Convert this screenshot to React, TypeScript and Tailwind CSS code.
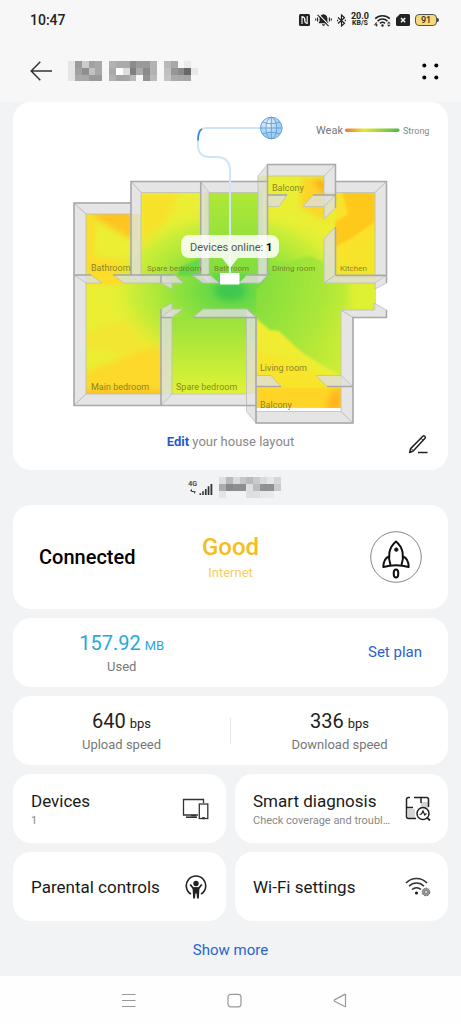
import type { ReactNode } from "react";

const TITLE_ROWS = [
  "#e4e4e4 #9a9a9a #cccccc #a2a2a2 #a8a8a8 - #b2b2b2 #aaaaaa #aaaaaa #8c8c8c #9a9a9a #999999 #b2b2b2 - #b8b8b8 #a8a8a8 - #ebebeb -",
  "#e4e4e4 #a0a0a0 #8f8f8f #c2c2c2 #a8a8a8 - #aaaaaa #fdfdfd #dddddd #808080 #aaaaaa #8a8a8a #b2b2b2 - #c0c0c0 #969696 #8a8a8a #686868 #e8e8e8",
  "#e4e4e4 #aaaaaa #a8a8a8 #999999 #9a9a9a - #b2b2b2 #a4a4a4 #a6a6a6 #bababa - #929292 #bababa - #c4c4c4 #aaaaaa #aaaaaa #a6a6a6 -",
];

const OPERATOR_ROWS = [
  "#dcdee0 #b8babc #d8dadc #c4c6c8 #b8babc #c8cacc #d8dadc #e4e6e8 #d4d6d8",
  "#aaacae #88898b #8d8e90 #8d8e90 #dddfe1 #bbbdbf #909193 #909193 #c8cacc",
  "#e2e4e6 - - - #dddfe1 #dddfe1 #e6e8ea #e8eaec -",
];

const Mosaic = ({ rows, label }: { rows: string[]; label: string }) => {
  const cols = rows[0].split(" ").length;
  return (
    <svg
      role="img"
      aria-label={label}
      viewBox={`0 0 ${cols * 7} 21`}
      width={cols * 6.85}
      height={20.6}
      shapeRendering="crispEdges"
    >
      {rows.map((row, y) =>
        row
          .split(" ")
          .map((fill, x) =>
            fill === "-" ? null : (
              <rect key={`${x}-${y}`} x={x * 7} y={y * 7} width={7} height={7} fill={fill} />
            )
          )
      )}
    </svg>
  );
};

const StatusBar = () => (
  <div className="flex h-10 items-center justify-between pl-[30px] pr-[22px] text-[#222]">
    <span className="text-sm font-medium">10:47</span>
    <div className="flex items-center gap-[5px]">
      <svg width="11" height="12" viewBox="0 0 11 12">
        <rect width="11" height="12" rx="1.5" fill="#222" />
        <path d="M3 10V2.600Q6 3 6 6V8.500M8.200 2V9.400Q5.600 9 5.600 6V4" fill="none" stroke="#f7f7f7" strokeWidth="1.100" />
      </svg>
      <svg width="17" height="14" viewBox="0 0 17 14">
        <path d="M8.500 1.200c-2.600.4-3.900 2-3.900 4.300v2.700L3.400 10.300h10.200L12.400 8.200V5.500c0-2.300-1.300-3.900-3.900-4.300z" fill="#222" />
        <path d="M7 11.300h3a1.500 1.500 0 0 1-3 0z" fill="#222" />
        <path d="M3.400 1.200l11 11.300" stroke="#f7f7f7" strokeWidth="1.200" />
        <path d="M2.600 1.800l11 11.300" stroke="#222" strokeWidth="1.100" />
        <path d="M2.600 4.500v4M.7 5.500v2M14.400 4.500v4M16.300 5.500v2" stroke="#222" strokeWidth="1.100" />
      </svg>
      <svg width="9" height="13" viewBox="0 0 9 13" fill="none" stroke="#222" strokeWidth="1.200">
        <path d="M1 3.500L7.500 9.300L4.500 12V1L7.500 3.700L1 9.500" />
        <path d="M0 6.500h1.200M7.800 6.500H9" strokeWidth="1.400" />
      </svg>
      <div className="flex flex-col items-center font-bold">
        <span className="text-[9px] leading-[7px]">20.0</span>
        <span className="text-[7px] leading-[7px]">KB/S</span>
      </div>
      <svg width="17" height="13" viewBox="0 0 17 13" fill="none" stroke="#222">
        <path d="M1.200 4.600a10.500 10.500 0 0 1 14.600 0M3.600 7.100a7 7 0 0 1 9.800 0M6 9.400a3.800 3.800 0 0 1 5 0" strokeWidth="1.500" />
        <circle cx="8.500" cy="11.500" r="1.200" fill="#222" stroke="none" />
        <path d="M2.600 8.200L.6 11h3M2.600 9.500v3" strokeWidth=".9" />
        <path d="M13 9.600l1.800-2 1.800 2zM13 10.800l1.800 2 1.800-2z" fill="#222" stroke="none" />
      </svg>
      <svg width="14" height="12" viewBox="0 0 14 12">
        <path d="M4 0h8.500A1.500 1.500 0 0 1 14 1.500v9a1.500 1.500 0 0 1-1.500 1.500h-11A1.500 1.500 0 0 1 0 10.500V4z" fill="#222" />
        <path d="M5 4l4.200 4.200M9.200 4L5 8.200" stroke="#f7f7f7" strokeWidth="1.500" />
      </svg>
      <div className="flex items-center">
        <span className="flex h-3 w-[22px] items-center justify-center rounded border border-[#555] bg-[#f8d978] text-[9px] font-medium leading-none text-[#333]">
          91
        </span>
        <span className="h-1 w-[2px] rounded-r bg-[#444]" />
      </div>
    </div>
  </div>
);

const Header = () => (
  <header className="flex h-[62px] items-center pl-[30px] pr-[22px]">
    <button type="button" aria-label="Back">
      <svg width="22" height="20" viewBox="0 0 22 20" fill="none" stroke="#333" strokeWidth="1.500">
        <path d="M10.300.8L1.200 10l9.100 9.200M1.200 10H22" />
      </svg>
    </button>
    <h1 className="ml-4">
      <Mosaic rows={TITLE_ROWS} label="Device name" />
    </h1>
    <button type="button" aria-label="More" className="ml-auto">
      <svg width="17" height="17" viewBox="0 0 17 17">
        <circle cx="2.300" cy="2.500" r="2" />
        <circle cx="14.300" cy="2.500" r="2" />
        <circle cx="2.300" cy="14.500" r="2" />
        <circle cx="14.300" cy="14.500" r="2" />
      </svg>
    </button>
  </header>
);

const WALLS = [
  // outer walls
  "74,203 86,214 86,394 74,405.500",
  "74,203 131,203 131,214 86,214",
  "131,181.500 267,181.500 258,192.500 141,192.500",
  "267.500,164.500 335.500,164.500 324,176 267.500,176",
  "335.500,181.500 386.500,181.500 375,192.500 335.500,192.500",
  "386.500,181.500 375,192.500 375,289 386.500,283",
  "341,310 374,310 374,303 386.500,310 386.500,317.500 353,317.500",
  "353,317.500 341,310 341,411.500 353,423",
  "256,411.500 341,411.500 353,423 256,423",
  "86,394 246.500,394 246.500,405.500 74,405.500",
  // verticals
  "131,181.500 141,192.500 141,283 131,275",
  "200.700,181.500 209,192.500 209,283 200.700,275",
  "267.500,164.500 258,176 258,283 267.500,275",
  "335.500,164.500 335.500,208 324,219 324,176",
  "335.500,227 324,239 324,283 335.500,275",
  "161,275 172,283 172,289 161,283",
  "161,309 172,303 172,394 161,405.500",
  "246.500,309 256,317.500 256,423 246.500,411.500",
  // horizontals
  "74,275 91,275 102,283 86,283",
  "113,275 175,275 183,283 124,283",
  "192,275 210,275 219,283 203,283",
  "247,275 267.500,275 260,283 239,283",
  "324,283 335.500,275 386.500,275 375,283",
  "161,317.500 172,317.500 183,309 172,309",
  "193,317.500 256,317.500 246.500,309 203,309",
  "267.500,195 287,195 279,206.500 267.500,206.500",
  "313,195 335.500,195 324,206.500 303,206.500",
  "256,375.500 271,375.500 281,386.500 256,386.500",
  "316,375.500 341,375.500 353,386.500 327,386.500",
];

const WALL_TOPS = [
  "M131 203H74V405.500H256",
  "M74 275H91M113 275H175M192 275H210M247 275H267.500M335.500 275.500H386.500",
  "M131 275V181.500H267.500M200.700 181.500V275",
  "M267.500 275V164.500H335.500V208M335.500 181.500H386.500V283",
  "M335.500 227V275M161 275V283M161 309V405.500",
  "M161 317.500H172M193 317.500H256V423H353V317.500H386.500V310",
  "M267.500 195H287M313 195H335.500M256 386.500H281M327 386.500H353",
];

const ROOMS = [
  { name: "Balcony", x: 272, y: 191, size: 9 },
  { name: "Bathroom", x: 91, y: 271, size: 9 },
  { name: "Spare bedroom", x: 147, y: 271, size: 8 },
  { name: "Bathroom", x: 214, y: 271, size: 8 },
  { name: "Dining room", x: 272, y: 271, size: 8 },
  { name: "Kitchen", x: 340, y: 271, size: 8 },
  { name: "Main bedroom", x: 91, y: 390, size: 9 },
  { name: "Spare bedroom", x: 176, y: 390, size: 9 },
  { name: "Living room", x: 260, y: 371, size: 9 },
  { name: "Balcony", x: 260, y: 408, size: 9 },
];

const HouseMap = () => (
  <svg className="block w-full" viewBox="13 102 435 325" fontFamily="Roboto, sans-serif">
    <defs>
      <clipPath id="floor">
        <path d="M86 214H141V192.500H258V176H324V192.500H375V283H376V310H341V408H256V394H86z" />
      </clipPath>
      <radialGradient id="signal" gradientUnits="userSpaceOnUse" cx="0" cy="0" r="1" gradientTransform="translate(232 290) scale(125 84)">
        <stop offset="0" stopColor="#4fd04a" />
        <stop offset=".2" stopColor="#6cd945" />
        <stop offset=".5" stopColor="#9ae43c" />
        <stop offset=".8" stopColor="#c4ed38" stopOpacity=".8" />
        <stop offset="1" stopColor="#e2f034" stopOpacity="0" />
      </radialGradient>
      <linearGradient id="spare" x1="0" y1="0" x2="0" y2="1">
        <stop offset="0" stopColor="#98e23c" />
        <stop offset=".6" stopColor="#c4ec38" />
        <stop offset="1" stopColor="#e0f334" />
      </linearGradient>
      <linearGradient id="bath" x1="0" y1="0" x2="0" y2="1">
        <stop offset="0" stopColor="#b2e836" />
        <stop offset="1" stopColor="#7fdd40" />
      </linearGradient>
      <linearGradient id="living" x1="0" y1="0" x2="1" y2=".3">
        <stop offset="0" stopColor="#84de3e" />
        <stop offset=".6" stopColor="#a8e63a" />
        <stop offset="1" stopColor="#d2ef38" />
      </linearGradient>
      <linearGradient id="scale">
        <stop offset="0" stopColor="#e67840" />
        <stop offset=".35" stopColor="#e8e83a" />
        <stop offset="1" stopColor="#4cb84a" />
      </linearGradient>
      <radialGradient id="globe" cx=".35" cy=".3">
        <stop offset="0" stopColor="#eef7ff" />
        <stop offset="1" stopColor="#a4cdf0" />
      </radialGradient>
      <filter id="soft" x="-20%" y="-20%" width="140%" height="140%">
        <feGaussianBlur stdDeviation="3" />
      </filter>
      <filter id="edge">
        <feGaussianBlur stdDeviation="1" />
      </filter>
    </defs>

    <g clipPath="url(#floor)">
      <rect x="74" y="164" width="314" height="260" fill="#eaef34" />
      <g filter="url(#soft)">
        <path d="M90 210H134V240L100 222z" fill="#ffc420" />
        <path d="M84 255L134 262V283H84z" fill="#fbdc2a" />
        <path d="M84 215H96L92 283H84z" fill="#fbdc2a" />
        <path d="M84 330L160 310V360L84 350z" fill="#f3e630" />
        <path d="M84 372L165 342V396H84z" fill="#fcd92c" />
        <path d="M84 391H164V397H84z" fill="#ffb820" />
        <path d="M140 190H180L165 225L141 250z" fill="#f7e22c" />
        <path d="M302 178H326V222L300 206z" fill="#fcd426" />
        <path d="M312 180H326V196z" fill="#fba91e" />
      </g>
      <rect x="74" y="180" width="302" height="230" fill="url(#signal)" />
      <rect x="205" y="190" width="58" height="85" fill="url(#bath)" />
      <path d="M256 290L280 264L310 256L324 262V283H376V310H341V376L256 325z" fill="url(#living)" filter="url(#edge)" opacity=".85" />
      <rect x="350" y="280" width="30" height="34" fill="#def132" filter="url(#soft)" />
      <rect x="163" y="317" width="86" height="78" fill="url(#spare)" />
      <path d="M256 318L270 330L279 331L302 353L311 365L318 374L341 380V408H256z" fill="#f0ec30" filter="url(#edge)" />
      <path d="M256 350L285 360L341 386V408H256z" fill="#f8e42c" filter="url(#soft)" />
      <path d="M256 388H341V408H256z" fill="#ffd426" filter="url(#edge)" />
      <path d="M330 396L341 386V410H326z" fill="#ffb31c" filter="url(#soft)" />
      <g filter="url(#edge)">
        <path d="M335 192H375V275H335z" fill="#fae22a" />
        <path d="M342 192H375V222L352 238L335 247V222L348 214z" fill="#ffc91f" />
        <path d="M335 258L375 236V275H335z" fill="#f6e42c" />
      </g>
      <g filter="url(#edge)">
        <path d="M183 266L200 258V276H176zM211 273H247L239 284H219z" fill="#66d844" />
        <path d="M92 274H112L124 284H102z" fill="#fddc2a" />
      </g>
      <ellipse cx="230" cy="291" rx="15" ry="9" fill="#3cc850" filter="url(#soft)" />
    </g>

    <g fill="#dfdfdf" fillOpacity=".8" stroke="#bdbdb8" strokeWidth=".8" strokeLinejoin="round">
      {WALLS.map((points) => (
        <polygon key={points} points={points} />
      ))}
    </g>
    <path d={WALL_TOPS.join("")} fill="none" stroke="#a9a9a9" strokeWidth="1.500" />

    <g fill="#6f6a20" fillOpacity=".8">
      {ROOMS.map((room) => (
        <text key={`${room.x}-${room.y}`} x={room.x} y={room.y} fontSize={room.size}>
          {room.name}
        </text>
      ))}
    </g>

    <path d="M260 128H206Q198 128 198 137V145Q198 157 210 157H216Q230 157 230 171V273" fill="none" stroke="#cfe5fa" strokeWidth="2" />
    <path d="M202 129Q198 131 198 140.500" fill="none" stroke="#2f86cc" strokeWidth="1.600" />
    <g fill="none" stroke="#5f9ed6" strokeWidth=".9">
      <circle cx="271.300" cy="128" r="10.800" fill="url(#globe)" />
      <ellipse cx="271.300" cy="128" rx="5.400" ry="10.800" />
      <path d="M271.300 117.200V138.800M260.500 128H282M262.500 122Q271.300 125.500 280 122M262.500 134Q271.300 130.500 280 134" />
    </g>

    <path d="M189 235H271a8 8 0 0 1 8 8v7a8 8 0 0 1-8 8H238L230 268L222 258H189a8 8 0 0 1-8-8v-7a8 8 0 0 1 8-8z" fill="#fff" fillOpacity=".85" />
    <rect x="220" y="273" width="19.500" height="11.500" rx="1" fill="#fff" />
    <text x="190" y="251" fontSize="11" fill="#555">
      Devices online: <tspan fill="#000" fontWeight="700">1</tspan>
    </text>

    <text x="316" y="134" fontSize="11" fill="#777">Weak</text>
    <rect x="345" y="128.500" width="54.500" height="3.500" rx="1.700" fill="url(#scale)" />
    <text x="403" y="134" fontSize="9" fill="#888">Strong</text>
  </svg>
);

const HouseCard = () => (
  <section className="rounded-[18px] bg-white">
    <HouseMap />
    <div className="relative flex h-[43px] justify-center pt-[5px] text-[13px] leading-5 text-[#888]">
      <p>
        <a href="#layout" className="font-bold text-[#1c5bd0]">Edit</a> your house layout
      </p>
      <button type="button" aria-label="Edit layout" className="absolute right-5 top-2">
        <svg width="20" height="20" viewBox="0 0 20 20" fill="none" stroke="#222" strokeWidth="1.500" strokeLinejoin="round">
          <path d="M14.800 1.200a1.500 1.500 0 0 1 2.200 2L5.200 16 1.600 17.500l1-3.900z" />
          <path d="M13 3.300l2.200 2M3 13.500l2 2" strokeWidth="1" />
          <path d="M10 17.500h9.500" />
        </svg>
      </button>
    </div>
  </section>
);

const NetworkRow = () => (
  <div className="flex h-[35px] items-center justify-center gap-[6px] pl-2">
    <div className="flex items-end gap-[1px]">
      <div className="flex flex-col items-center text-[7px] font-medium leading-[8px] text-[#333]">
        <span>4G</span>
        <svg width="6" height="7" viewBox="0 0 6 7" fill="#333">
          <path d="M0 3L2 .8V3.400zM6 3.500L4 6V3.200zM1.500 3H4.500V4H1.500z" />
        </svg>
      </div>
      <svg width="15" height="12" viewBox="0 0 15 12" fill="#333">
        <path d="M1.500 10.200h1.600V12H1.500zM4.200 8.200h1.600V12H4.200zM6.900 6h1.700v6H6.900zM9.700 3.300h1.700V12H9.700zM12.500 1h1.800v11h-1.800z" />
      </svg>
    </div>
    <Mosaic rows={OPERATOR_ROWS} label="Operator" />
  </div>
);

const StatusCard = () => (
  <section className="grid h-[104px] grid-cols-3 items-center rounded-[18px] bg-white px-[26px]">
    <h2 className="text-xl font-medium text-black">Connected</h2>
    <div className="text-center">
      <p className="text-2xl font-medium leading-8 text-[#f5bd1d]">Good</p>
      <p className="text-[13px] leading-5 text-[#f7ce5c]">Internet</p>
    </div>
    <button type="button" aria-label="Speed up" className="justify-self-end">
      <svg width="52" height="52" viewBox="0 0 52 52" fill="none" stroke="#111" strokeWidth="2" strokeLinejoin="round">
        <circle cx="26" cy="26" r="25.300" stroke="#888" strokeWidth="1" />
        <path d="M20.500 34C17.800 26 18.500 16.500 26 10.500C33.500 16.500 34.200 26 31.500 34" />
        <path d="M18.900 25.500Q13.600 27.500 13.300 36Q26 32.500 38.700 36Q38.400 27.500 33.100 25.500" />
        <circle cx="26.300" cy="18.600" r="1.700" fill="#111" strokeWidth="1" />
        <ellipse cx="26" cy="42.500" rx="2.300" ry="4" />
      </svg>
    </button>
  </section>
);

type MetricProps = { value: string; unit: string; label: string; color: string };

const Metric = ({ value, unit, label, color }: MetricProps) => (
  <div className="text-center">
    <p className={`text-xl leading-7 ${color}`}>
      {value}
      <span className="ml-1 text-[13px] leading-none">{unit}</span>
    </p>
    <p className="text-[13px] leading-5 text-[#777]">{label}</p>
  </div>
);

type TileProps = { title: string; note?: string; icon: ReactNode };

const Tile = ({ title, note, icon }: TileProps) => (
  <button
    type="button"
    className="flex h-[69px] min-w-0 items-center gap-2 rounded-[18px] bg-white pl-[18px] pr-[17px] text-left"
  >
    <span className="min-w-0 flex-1 whitespace-nowrap">
      <span className="block text-[17px] leading-6 text-[#191919]">{title}</span>
      {note && <span className="block text-[11px] leading-4 text-[#888]">{note}</span>}
    </span>
    {icon}
  </button>
);

const DevicesIcon = () => (
  <svg className="shrink-0" width="27" height="22" viewBox="0 0 27 22" fill="none" stroke="#333" strokeWidth="1.300">
    <path d="M16 17H1.500V1.500H21.500V5" />
    <path d="M4 19.200H15" strokeWidth="1.600" />
    <path d="M9 17.600H14" strokeWidth="1.600" />
    <rect x="17.300" y="6" width="8.500" height="14.500" />
    <path d="M20 20.200H23" strokeWidth="2" />
  </svg>
);

const DiagnosisIcon = () => (
  <svg className="shrink-0" width="26" height="25" viewBox="0 0 26 25" fill="none" stroke="#222" strokeWidth="1.500">
    <path d="M3 13H10V22H3zM16 6H23V12H16z" fill="#d4d4d4" stroke="none" />
    <path d="M5 1.500H3.500Q1.500 1.500 1.500 3.500V20.500Q1.500 22.500 3.500 22.500H11M9 1.500H21.500Q23.500 1.500 23.500 3.500V11M1.500 11.500H8M16 1.500V7" />
    <circle cx="18" cy="17.500" r="6" fill="#fff" />
    <path d="M22.300 21.800L25 24.500" strokeWidth="1.800" />
    <path d="M14.500 18.500L16.500 18L18 15L19.800 19L21.500 17.500" strokeWidth="1.200" />
  </svg>
);

const ParentalIcon = () => (
  <svg className="mr-[2px] shrink-0" width="22" height="25" viewBox="0 0 22 25" fill="none" stroke="#222">
    <path d="M6 20A9.700 9.700 0 1 1 16 20" strokeWidth="1.600" />
    <circle cx="11" cy="9.500" r="2.700" fill="#222" stroke="none" />
    <path d="M5.200 10.500L8.200 14.200H13.800L16.800 10.500" strokeWidth="1.800" />
    <path d="M7.500 13.500H14.500L13.800 24.500H12L11.600 19.500H10.400L10 24.500H8.200z" fill="#222" stroke="none" />
  </svg>
);

const WifiSettingsIcon = () => (
  <svg className="shrink-0" width="26" height="20" viewBox="0 0 26 20" fill="none" stroke="#333" strokeWidth="1.500">
    <path d="M1 6A14.500 14.500 0 0 1 22 6M4 9.200A10.500 10.500 0 0 1 19 9.200M7 12.500A6.400 6.400 0 0 1 16 12.500" />
    <circle cx="11.500" cy="16" r="1.600" fill="#222" stroke="none" />
    <circle cx="21" cy="15" r="3.800" fill="#999" stroke="#666" strokeWidth="1" strokeDasharray="2 .8" />
    <circle cx="21" cy="15" r="1.500" fill="#eee" stroke="#666" strokeWidth=".7" />
  </svg>
);

const NavBar = () => (
  <nav className="flex h-12 items-center justify-center gap-[91px] bg-[#fefefe] pl-[7px]">
    <button type="button" aria-label="Recent apps">
      <svg width="15" height="15" viewBox="0 0 15 15" stroke="#999" strokeWidth="1.200">
        <path d="M1 1.500H14.500M1 7.500H14.500M1 13.500H14.500" />
      </svg>
    </button>
    <button type="button" aria-label="Home">
      <svg width="15" height="15" viewBox="0 0 15 15" fill="none" stroke="#999" strokeWidth="1.200">
        <rect x="1" y="1.300" width="13" height="12.500" rx="2.800" />
      </svg>
    </button>
    <button type="button" aria-label="Back to previous">
      <svg width="14" height="15" viewBox="0 0 14 15" fill="none" stroke="#999" strokeWidth="1.200" strokeLinejoin="round">
        <path d="M12.500 1.800V13.200Q12.300 13.800 11.700 13.500L1.500 8.200Q.7 7.500 1.500 6.900L11.700 1.400Q12.400 1.200 12.500 1.800z" />
      </svg>
    </button>
  </nav>
);

const App = () => {
  return (
    <div className="flex min-h-screen flex-col bg-[#f1f3f5] font-[Roboto,sans-serif]">
      <div className="bg-[#f7f7f7]">
        <StatusBar />
        <Header />
      </div>
      <main className="flex-1 px-[13px]">
        <HouseCard />
        <NetworkRow />
        <div className="flex flex-col gap-[9px]">
          <StatusCard />
          <section className="grid h-[69px] grid-cols-2 items-center rounded-[18px] bg-white">
            <Metric value="157.92" unit="MB" label="Used" color="text-[#28a9d8]" />
            <button type="button" className="mr-[26px] justify-self-end text-[15px] text-[#2a63cf]">
              Set plan
            </button>
          </section>
          <section className="grid h-[69px] grid-cols-[1fr_1px_1fr] items-center rounded-[18px] bg-white">
            <Metric value="640" unit="bps" label="Upload speed" color="text-[#222]" />
            <span className="h-[26px] bg-[#e5e5e5]" />
            <Metric value="336" unit="bps" label="Download speed" color="text-[#222]" />
          </section>
          <div className="grid grid-cols-2 gap-[9px]">
            <Tile title="Devices" note="1" icon={<DevicesIcon />} />
            <Tile
              title="Smart diagnosis"
              note="Check coverage and troubl…"
              icon={<DiagnosisIcon />}
            />
            <Tile title="Parental controls" icon={<ParentalIcon />} />
            <Tile title="Wi-Fi settings" icon={<WifiSettingsIcon />} />
          </div>
        </div>
        <div className="flex h-[54px] items-center justify-center pt-1">
          <a href="#more" className="text-[15px] text-[#2a63cf]">
            Show more
          </a>
        </div>
      </main>
      <NavBar />
    </div>
  );
};

export default App;
